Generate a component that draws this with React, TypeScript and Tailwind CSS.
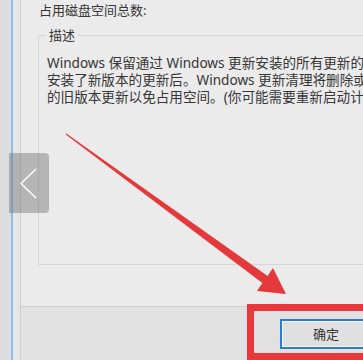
export default function App() {
  return (
    <div className="relative w-[363px] h-[360px] overflow-hidden bg-[#ebebeb] text-[13px] text-[#363636] font-['Noto_Sans','Noto_Sans_CJK_SC',sans-serif]">
      <div className="flex h-full">
        {/* window edge */}
        <div className="w-[11px] shrink-0 bg-[#dcdcdc]" />
        <div className="w-[2px] shrink-0 bg-[#8cc0ea]" />
        <div className="w-[7px] shrink-0 bg-[#e6e6e6]" />

        {/* dialog body */}
        <div className="flex-1 min-w-0 flex flex-col border-l border-[#cdcdcd]">
          <div className="h-[307px] border-b border-[#d0d0d0] shrink-0">
            <p className="pl-[18px] pt-[2px] leading-[17px] whitespace-nowrap">占用磁盘空间总数:</p>
            <fieldset className="ml-[17px] mt-[8px] w-[360px] h-[238px] border border-[#d6d6d6] px-[7px] whitespace-nowrap">
              <legend className="px-[3px] leading-[17px]">描述</legend>
              <div className="pt-[10px] pl-[1px] leading-[17px] text-[13.6px]">
                <p>Windows 保留通过 Windows 更新安装的所有更新的副本，即使在</p>
                <p>安装了新版本的更新后。Windows 更新清理将删除或压缩不再需要</p>
                <p>的旧版本更新以免占用空间。(你可能需要重新启动计算机。)</p>
              </div>
            </fieldset>
          </div>
          <div className="flex-1 bg-[#e1e1e1] pt-[12px] pl-[259px]">
            <button className="w-[92px] h-[30px] border-2 border-[#2f7cc6] bg-[#e0e0e0] shadow-[inset_0_0_0_1px_#f4f4f4] leading-none">
              确定
            </button>
          </div>
        </div>
      </div>

      {/* side navigation tab */}
      <div className="absolute left-[9px] top-[153px] w-[40px] h-[60px] rounded-r-[4px] bg-[rgba(115,115,115,0.45)]">
        <svg width="40" height="60" viewBox="0 0 40 60">
          <polyline points="27,16 12,30.5 27,45" fill="none" stroke="#ffffff" strokeWidth="1.4" />
        </svg>
      </div>

      {/* red annotation arrow */}
      <svg className="absolute left-0 top-0" width="363" height="360" viewBox="0 0 363 360">
        <polygon
          points="65.7,134.4 66.3,133.6 267.6,275.9 273,268 286,294 257,291 262.4,283.1"
          fill="#e5383b"
        />
      </svg>

      {/* red highlight box */}
      <div className="absolute left-[247px] top-[304px] w-[130px] h-[56px] border-[7px] border-[#e8383b]" />
    </div>
  );
}
